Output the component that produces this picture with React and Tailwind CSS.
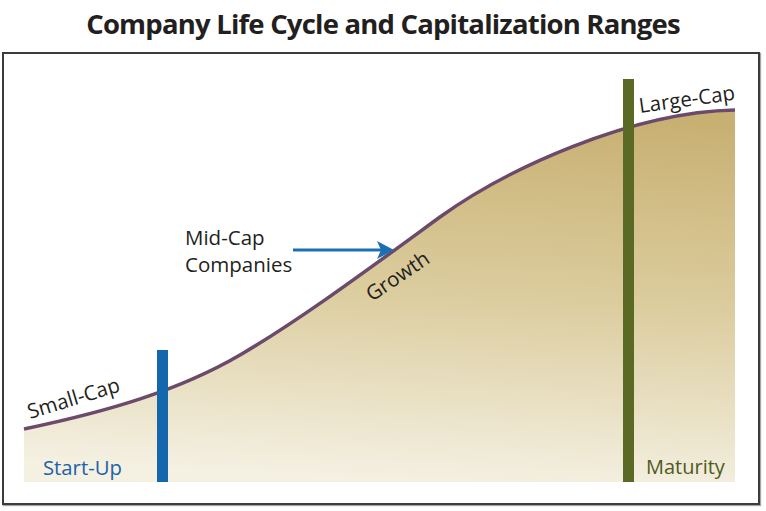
import React from 'react';

const curve = 'M24 429 C110 411 180 390 240 355 C300 320 370 268 440 217 C505 170 630 112 735 110';

export default function App() {
  return (
    <div className="w-[766px] h-[511px] bg-white overflow-hidden" style={{ fontFamily: '"Open Sans", "Liberation Sans", sans-serif' }}>
      <h1 className="h-[52px] pt-[2px] text-center text-[27.5px] leading-[44px] font-bold text-[#231f20] tracking-[-0.8px]">
        Company Life Cycle and Capitalization Ranges
      </h1>
      <div className="ml-[2px] w-[758px] h-[453px] border-2 border-[#3c3c3c] shadow-[1px_1px_1px_rgba(0,0,0,0.35)]">
        <svg width="754" height="449" viewBox="4 54 754 449" className="block">
          <defs>
            <linearGradient id="fill" gradientUnits="userSpaceOnUse" x1="460" y1="110" x2="440" y2="482">
              <stop offset="0" stopColor="#c8b072" />
              <stop offset="0.5" stopColor="#dccd9f" />
              <stop offset="1" stopColor="#f4f0e2" />
            </linearGradient>
          </defs>
          <path d={`${curve} L735 482 L24 482 Z`} fill="url(#fill)" />
          <path d={curve} fill="none" stroke="#6c4a6b" strokeWidth="3.5" />

          <rect x="157" y="350" width="11" height="132" fill="#1466ad" />
          <rect x="623" y="79" width="11" height="403" fill="#5a6a24" />

          <line x1="293" y1="250" x2="382" y2="250" stroke="#1a70b3" strokeWidth="3" />
          <path d="M377 241 L394 250 L377 259 L381 250 Z" fill="#1a70b3" />

          <g fontSize="20.5" fill="#231f20">
            <text x="30" y="419" transform="rotate(-17 30 419)">Small-Cap</text>
            <text x="372" y="302" transform="rotate(-34 372 302)">Growth</text>
            <text x="640" y="113" transform="rotate(-8 640 113)">Large-Cap</text>
            <text x="185" y="245">Mid-Cap</text>
            <text x="185" y="272">Companies</text>
          </g>
          <text x="43" y="475" fontSize="20.3" fill="#1a63a7">Start-Up</text>
          <text x="646" y="474" fontSize="20" fill="#4f5a1e">Maturity</text>
        </svg>
      </div>
    </div>
  );
}
